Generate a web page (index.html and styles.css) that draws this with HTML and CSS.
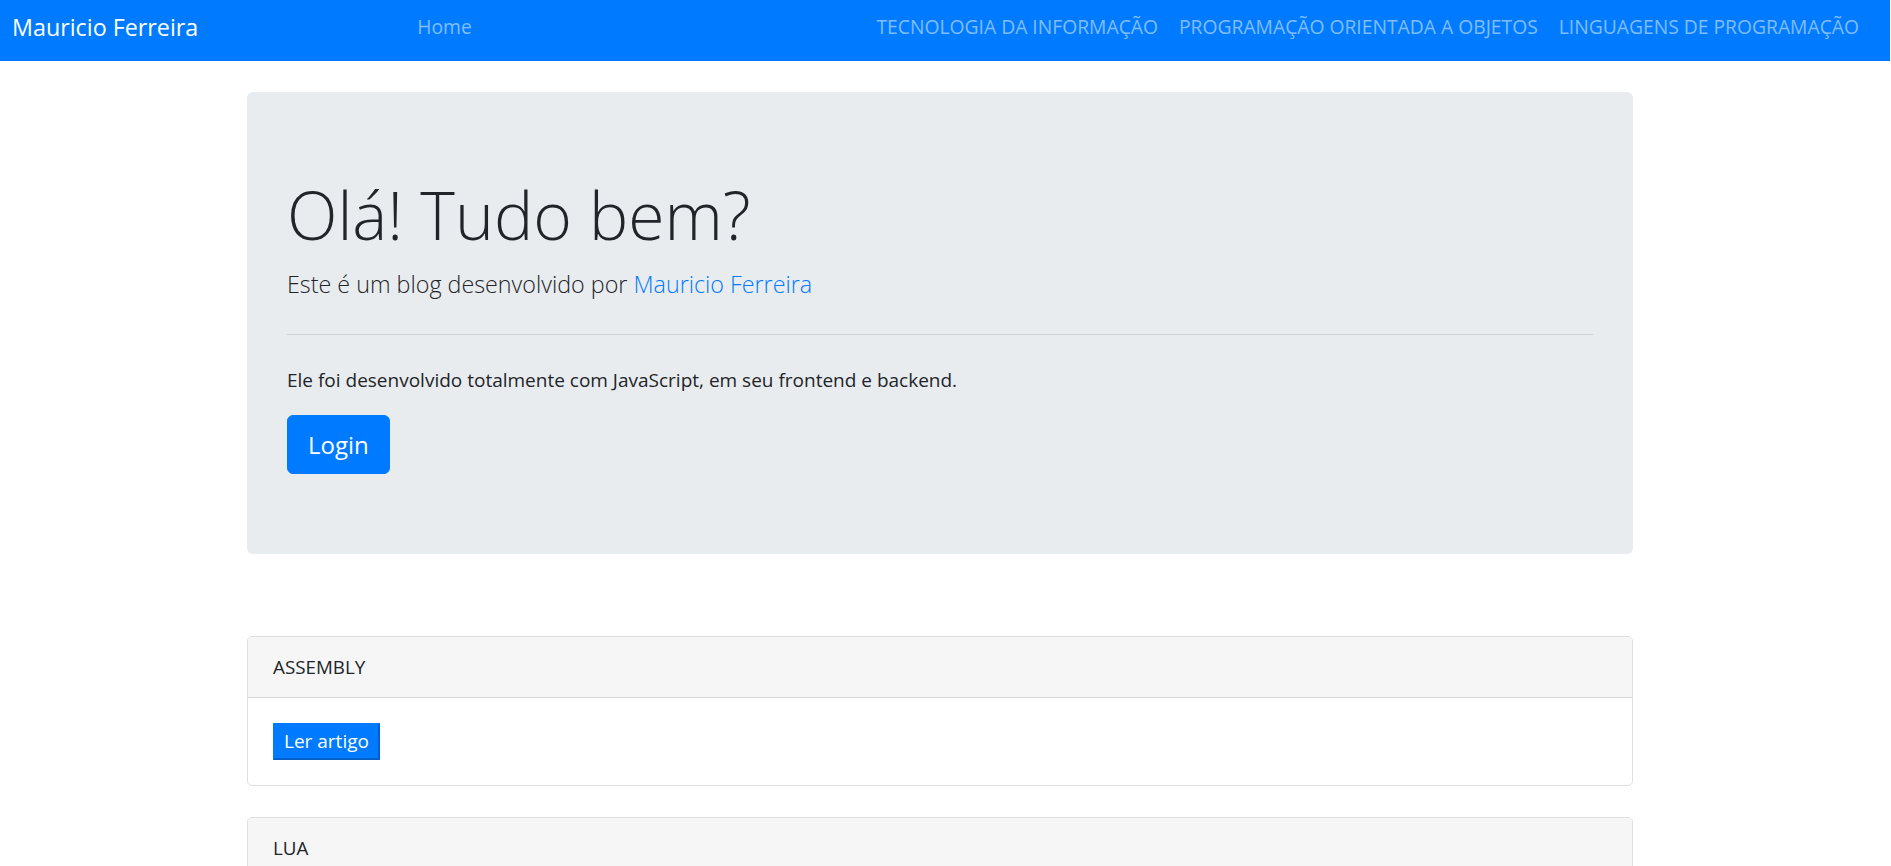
FILE: index.html
```html
<!DOCTYPE html>
<html lang="pt-BR">
<head>
<meta charset="utf-8">
<title>Mauricio Ferreira</title>
<link rel="stylesheet" href="styles.css">
</head>
<body>
<nav class="navbar">
  <a class="brand" href="#">Mauricio Ferreira</a>
  <ul class="nav nav-left">
    <li><a class="nav-link" href="#">Home</a></li>
  </ul>
  <ul class="nav nav-right">
    <li><a class="nav-link" href="#">TECNOLOGIA DA INFORMAÇÃO</a></li>
    <li><a class="nav-link" href="#">PROGRAMAÇÃO ORIENTADA A OBJETOS</a></li>
    <li><a class="nav-link" href="#">LINGUAGENS DE PROGRAMAÇÃO</a></li>
  </ul>
</nav>
<main class="page">
  <div class="container">
    <section class="jumbotron">
      <h1 class="display">Olá! Tudo bem?</h1>
      <p class="lead">Este é um blog desenvolvido por <a href="#">Mauricio Ferreira</a></p>
      <hr class="divider">
      <p class="text">Ele foi desenvolvido totalmente com JavaScript, em seu frontend e backend.</p>
      <a class="btn-login" href="#">Login</a>
    </section>
    <div class="cards">
      <article class="card">
        <div class="card-header">ASSEMBLY</div>
        <div class="card-body"><button class="btn-read">Ler artigo</button></div>
      </article>
      <article class="card">
        <div class="card-header">LUA</div>
        <div class="card-body"><button class="btn-read">Ler artigo</button></div>
      </article>
    </div>
  </div>
</main>
</body>
</html>
```
FILE: styles.css
```css
* { box-sizing: border-box; }
html, body { margin: 0; padding: 0; }
body {
  font-family: "Open Sans", "Noto Sans", "Liberation Sans", sans-serif;
  font-size: 19px;
  line-height: 30px;
  color: #212529;
  background: #fff;
}
a { color: #007bff; text-decoration: none; }

.navbar {
  display: flex;
  align-items: center;
  height: 61px;
  background: #007bff;
  padding: 0 31px 7px 12px;
  margin-right: 1px;
}
.brand {
  color: #fff;
  font-size: 23.3px;
  line-height: 37px;
  white-space: nowrap;
}
.nav {
  list-style: none;
  margin: 0;
  padding: 0;
  display: flex;
}
.nav-left { margin-left: 219px; }
.nav-right { margin-left: auto; gap: 21px; }
.nav-link {
  color: rgba(255, 255, 255, 0.5);
  font-size: 19.3px;
  line-height: 30px;
  white-space: nowrap;
}

.page { padding: 31px 11px 0 0; }
.container { width: 1386px; margin: 0 auto; }

.jumbotron {
  background: #e9ecef;
  border-radius: 6px;
  padding: 80px 40px;
}
.display {
  margin: 0 0 10px;
  font-size: 66px;
  font-weight: 300;
  line-height: 84px;
}
.lead {
  margin: 0 0 30px;
  font-size: 23.3px;
  font-weight: 300;
  line-height: 37.5px;
}
.divider {
  margin: 0 0 30px;
  border: 0;
  border-top: 1px solid rgba(0, 0, 0, 0.1);
  height: 0;
}
.text { margin: 0 0 20px; font-size: 19px; line-height: 30px; }
.btn-login {
  display: inline-block;
  background: #007bff;
  color: #fff;
  font-size: 24px;
  line-height: 37.5px;
  padding: 10px 20px;
  border: 1px solid #007bff;
  border-radius: 6px;
}

.cards {
  display: flex;
  flex-direction: column;
  gap: 31px;
  margin-top: 82px;
}
.card {
  border: 1px solid rgba(0, 0, 0, 0.125);
  border-radius: 5px;
  overflow: hidden;
}
.card-header {
  background: #f6f6f6;
  padding: 15px 25px;
  border-bottom: 1px solid rgba(0, 0, 0, 0.125);
  font-size: 18.8px;
  line-height: 30px;
}
.card-body { padding: 25px; }
.btn-read {
  font-family: inherit;
  font-size: 19px;
  line-height: 25px;
  padding: 4px 9px;
  color: #fff;
  background: #007bff;
  border: 2px solid;
  border-color: #007bff #0060c8 #0060c8 #007bff;
  border-radius: 0;
  display: block;
}
```
